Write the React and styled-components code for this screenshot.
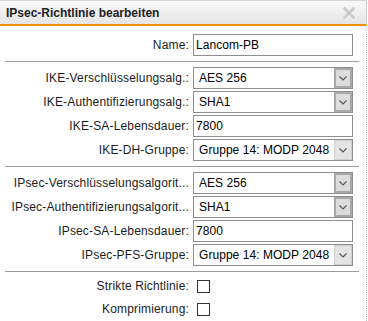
import React from 'react';
import styled, { createGlobalStyle } from 'styled-components';

const Global = createGlobalStyle`
  html, body { margin: 0; padding: 0; background: #fff; }
  body { font-family: "Liberation Sans", Arial, sans-serif; font-size: 12px; color: #1e1e1e; }
  * { box-sizing: border-box; }
`;

const Window = styled.div`
  width: 367px;
  height: 321px;
  overflow: hidden;
  background: #fff;
`;

const TitleBar = styled.div`
  height: 26px;
  display: flex;
  align-items: center;
  justify-content: space-between;
  padding: 0 11px 0 6px;
  background: linear-gradient(#f9f9f9, #e5e5e5);
  border-top: 1px solid #d6d6d6;
  border-right: 1px solid #cfcfcf;
  border-bottom: 2px solid #f29100;
`;

const Title = styled.div`
  font-weight: bold;
  font-size: 12px;
  color: #222;
`;

const Close = styled.svg`
  width: 12px;
  height: 12px;
  display: block;
`;

const Body = styled.div`
  border-right: 1px dotted #bdbdbd;
  padding: 0 7px 0 5px;
  height: 295px;
`;

const Section = styled.div`
  display: flex;
  flex-direction: column;
  gap: ${p => p.$gap ?? 2}px;
  padding: ${p => p.$top ?? 5}px 0 ${p => p.$bottom ?? 5}px;
`;

const Divider = styled.div`
  height: 1px;
  background: #9c9c9c;
`;

const Row = styled.div`
  display: grid;
  grid-template-columns: 184px 160px;
  column-gap: 4px;
  align-items: center;
  height: ${p => p.$h ?? 22}px;
`;

const Label = styled.div`
  text-align: right;
  white-space: nowrap;
  overflow: hidden;
  color: #1c1c1c;
  letter-spacing: 0.16px;
`;

const TextInput = styled.input`
  height: 22px;
  width: 160px;
  margin: 0;
  border: 1px solid #8e8e8e;
  padding: 0 2px;
  font: 12px "Liberation Sans", Arial, sans-serif;
  letter-spacing: 0.05px;
  color: #000;
  background: #fff;
  outline: none;
`;

const SelectBox = styled.div`
  height: 22px;
  width: 160px;
  display: flex;
  border: 1px solid #8e8e8e;
  background: #fff;
`;

const SelectText = styled.div`
  flex: 1;
  display: flex;
  align-items: center;
  padding-left: 5px;
  color: #000;
  letter-spacing: 0.05px;
  white-space: nowrap;
  overflow: hidden;
`;

const SelectButton = styled.div`
  width: 18px;
  display: flex;
  align-items: center;
  justify-content: center;
  background: ${p => (p.$framed ? '#dcdcdc' : '#e4e4e4')};
  box-shadow: ${p => (p.$framed ? 'inset 0 0 0 2px #a9a9a9' : 'inset 0 0 0 1px #d0d0d0')};
`;

const Chevron = styled.svg`
  width: 8px;
  height: 5px;
  display: block;
`;

const Check = styled.input`
  appearance: none;
  width: 13px;
  height: 13px;
  margin: 0 0 0 4px;
  border: 1px solid #333;
  background: #fff;
  display: block;
`;

const Select = ({ value, framed }) => (
  <SelectBox>
    <SelectText>{value}</SelectText>
    <SelectButton $framed={framed}>
      <Chevron viewBox="0 0 8 5">
        <polyline points="0.5,0.5 4,4 7.5,0.5" fill="none" stroke="#555" strokeWidth="1.1" />
      </Chevron>
    </SelectButton>
  </SelectBox>
);

export default function App() {
  return (
    <Window>
      <Global />
      <TitleBar>
        <Title>IPsec-Richtlinie bearbeiten</Title>
        <Close viewBox="0 0 12 12">
          <path d="M1.5 1.5 L10.5 10.5 M10.5 1.5 L1.5 10.5" stroke="#c9c9c9" strokeWidth="2.6" strokeLinecap="square" />
        </Close>
      </TitleBar>
      <Body>
        <Section $top={8}>
          <Row>
            <Label>Name:</Label>
            <TextInput defaultValue="Lancom-PB" />
          </Row>
        </Section>
        <Divider />
        <Section>
          <Row>
            <Label>IKE-Verschlüsselungsalg.:</Label>
            <Select value="AES 256" framed />
          </Row>
          <Row>
            <Label>IKE-Authentifizierungsalg.:</Label>
            <Select value="SHA1" framed />
          </Row>
          <Row>
            <Label>IKE-SA-Lebensdauer:</Label>
            <TextInput defaultValue="7800" />
          </Row>
          <Row>
            <Label>IKE-DH-Gruppe:</Label>
            <Select value="Gruppe 14: MODP 2048" />
          </Row>
        </Section>
        <Divider />
        <Section>
          <Row>
            <Label>IPsec-Verschlüsselungsalgorit...</Label>
            <Select value="AES 256" framed />
          </Row>
          <Row>
            <Label>IPsec-Authentifizierungsalgorit...</Label>
            <Select value="SHA1" framed />
          </Row>
          <Row>
            <Label>IPsec-SA-Lebensdauer:</Label>
            <TextInput defaultValue="7800" />
          </Row>
          <Row>
            <Label>IPsec-PFS-Gruppe:</Label>
            <Select value="Gruppe 14: MODP 2048" />
          </Row>
        </Section>
        <Divider />
        <Section $top={5} $gap={5}>
          <Row $h={18}>
            <Label>Strikte Richtlinie:</Label>
            <div><Check type="checkbox" /></div>
          </Row>
          <Row $h={18}>
            <Label>Komprimierung:</Label>
            <div><Check type="checkbox" /></div>
          </Row>
        </Section>
      </Body>
    </Window>
  );
}
